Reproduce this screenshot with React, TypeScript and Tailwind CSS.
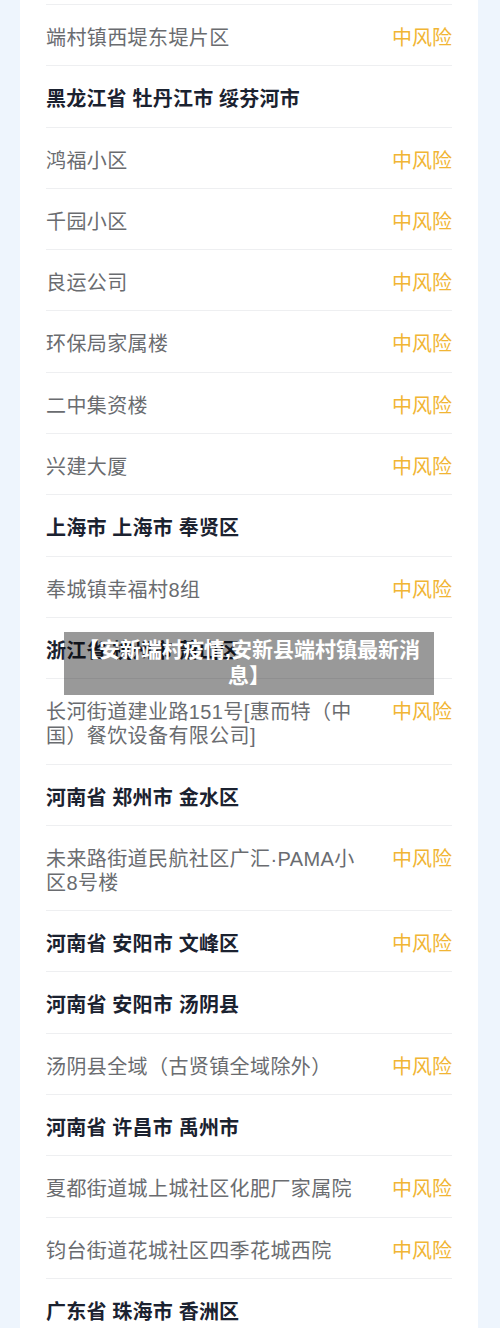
import React from "react";

type Row = { t: string; h?: boolean; r?: boolean };

const rows: Row[] = [
  { t: "端村镇西堤东堤片区", r: true },
  { t: "黑龙江省 牡丹江市 绥芬河市", h: true },
  { t: "鸿福小区", r: true },
  { t: "千园小区", r: true },
  { t: "良运公司", r: true },
  { t: "环保局家属楼", r: true },
  { t: "二中集资楼", r: true },
  { t: "兴建大厦", r: true },
  { t: "上海市 上海市 奉贤区", h: true },
  { t: "奉城镇幸福村8组", r: true },
  { t: "浙江省 杭州市 萧山区", h: true },
  { t: "长河街道建业路151号[惠而特（中国）餐饮设备有限公司]", r: true },
  { t: "河南省 郑州市 金水区", h: true },
  { t: "未来路街道民航社区广汇·PAMA小区8号楼", r: true },
  { t: "河南省 安阳市 文峰区", h: true, r: true },
  { t: "河南省 安阳市 汤阴县", h: true },
  { t: "汤阴县全域（古贤镇全域除外）", r: true },
  { t: "河南省 许昌市 禹州市", h: true },
  { t: "夏都街道城上城社区化肥厂家属院", r: true },
  { t: "钧台街道花城社区四季花城西院", r: true },
  { t: "广东省 珠海市 香洲区", h: true },
];

export default function App() {
  return (
    <div
      className="relative w-[500px] h-[1328px] overflow-hidden bg-[#eef5fd] px-[20px]"
      style={{ fontFamily: '"Liberation Sans", "Noto Sans CJK SC", sans-serif' }}
    >
      <div className="w-[458px] h-full bg-white px-[26px]">
        <div className="h-[5px] border-b border-[#eeeff1]" />
        {rows.map((row, i) => (
          <div
            key={i}
            className="flex items-start justify-between gap-[30px] pt-[21px] pb-[15.3px] border-b border-[#eeeff1] text-[20px] leading-[24px]"
          >
            <div
              className={
                row.h
                  ? "font-bold text-[#1b2230] tracking-[0.2px]"
                  : "text-[#6a6c70] tracking-[0.4px]"
              }
            >
              {row.t}
            </div>
            {row.r && (
              <div className="shrink-0 text-[#f1b534]">中风险</div>
            )}
          </div>
        ))}
      </div>
      <div className="absolute left-[64px] top-[632px] w-[370px] h-[63px] bg-[rgba(0,0,0,0.4)] px-[12px] pt-[5px] text-center text-white font-bold text-[21px] leading-[26px]">
        【安新端村疫情,安新县端村镇最新消息】
      </div>
    </div>
  );
}
